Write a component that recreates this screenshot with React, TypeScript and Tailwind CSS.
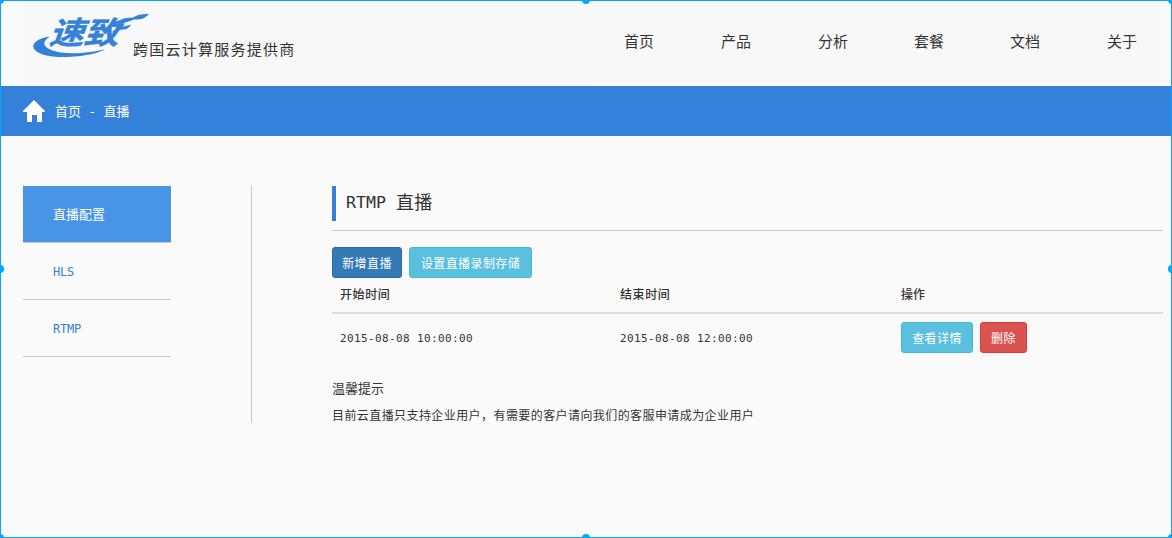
const sans = "font-['Noto_Sans_CJK_SC',sans-serif]";
const mono = "font-['DejaVu_Sans_Mono','Liberation_Mono',monospace]";

const NAV = [
  { label: "首页", width: "w-[97px]" },
  { label: "产品", width: "w-[97px]" },
  { label: "分析", width: "w-[96px]" },
  { label: "套餐", width: "w-[96px]" },
  { label: "文档", width: "w-[97px]" },
  { label: "关于", width: "w-[55px]" },
];

function Logo() {
  return (
    <svg width="118" height="60" viewBox="32 4 118 60" className="shrink-0 overflow-visible" fill="#3481da">
      <text
        x="0"
        y="0"
        transform="translate(48.5 43.6) skewX(-20) scale(1.12 1)"
        fontFamily="'Noto Sans CJK SC', sans-serif"
        fontWeight="700"
        fontSize="31"
        stroke="#3481da"
        strokeWidth="0.4"
      >
        速致
      </text>
      <path d="M50 36.5 C38 38 32 43 33.5 48 C36 54 49 57.5 68 57 C86 56 100 53 105 49 C93 52.5 75 54.5 61 52.5 C45 50 39 43 50 36.5Z" />
      <path d="M112 23 L124 18.5 C128 17.5 130 18 133 17.5 C137 15 141 14 149 14 C144 19 140 20 134 19.5 C130 21 125 23 119 23.5Z" />
      <path d="M112 32 C117 27.5 121 27 124 26.5 C127 26 129 25 131 24.5 C129 28.5 126 30 122 29.5 C119 30 116 31.5 114 33Z" />
    </svg>
  );
}

function Header() {
  return (
    <header className="flex h-[85px] pl-[22px]">
      <div className="flex h-full w-[567px] items-start bg-[#f8f8f8] pl-[9px] pt-[3px]">
        <Logo />
        <span className="-ml-[17px] mt-[33px] whitespace-nowrap text-[15px] leading-6 tracking-[1.25px]">跨国云计算服务提供商</span>
      </div>
      <div className="grow border-b-[3px] border-white pr-[9px]">
        <nav className="flex h-full bg-[#f8f8f8] pl-[34px] pt-[28px]">
          {NAV.map((n) => (
            <a key={n.label} className={`${n.width} shrink-0 whitespace-nowrap text-[15px] leading-6`}>{n.label}</a>
          ))}
        </nav>
      </div>
    </header>
  );
}

function Button({ label, look }: { label: string; look: string }) {
  return (
    <button className={`${look} h-[31px] whitespace-nowrap rounded-[3px] border text-center text-[12px] leading-[29px] tracking-[0.4px] text-white`}>
      {label}
    </button>
  );
}

const HANDLES = [
  "-left-[5px] -top-[5px]",
  "left-[581px] -top-[5px]",
  "-right-[5px] -top-[5px]",
  "-left-[5px] top-[264px]",
  "-right-[5px] top-[264px]",
  "-left-[5px] -bottom-[5px]",
  "left-[581px] -bottom-[5px]",
  "-right-[5px] -bottom-[5px]",
];

export default function App() {
  return (
    <div className={`${sans} relative h-[538px] w-[1172px] overflow-hidden border border-[#00a8ff] bg-[#fafafa] text-[#333]`}>
      <Header />
      <div className="flex h-[50px] items-center bg-[#3481da] pl-[22px] text-[13px] text-white">
        <svg width="22" height="22" viewBox="0 0 22 22" fill="white">
          <path d="M11 0 22 11v1h-3v10h-5v-7H9v7H4V12H0v-1Z" />
        </svg>
        <span className="ml-[10px]">首页</span>
        <span className="ml-[9px] mr-[9px]">-</span>
        <span>直播</span>
      </div>

      <div className="flex pl-[22px] pt-[50px]">
        <aside className="w-[148px] shrink-0 text-[#3481da]">
          <div className="h-[57px] border-b border-[#c8c8c8] bg-[#4895e8] pl-[30px] text-[13px] leading-[56px] text-white">直播配置</div>
          <div className={`${mono} h-[57px] border-b border-[#c8c8c8] pl-[30px] text-[12px] leading-[59px] tracking-[-0.2px]`}>HLS</div>
          <div className={`${mono} h-[57px] border-b border-[#c8c8c8] pl-[30px] text-[12px] leading-[59px] tracking-[-0.2px]`}>RTMP</div>
        </aside>
        <div className="ml-[80px] h-[237px] w-px shrink-0 bg-[#c8c8c8]" />
        <main className="ml-[80px] w-[831px] shrink-0">
          <div className="h-[45px] border-b border-[#c8c8c8]">
            <h1 className="flex h-[35px] items-center border-l-4 border-[#3481da] pb-[6px] pl-[10px]">
              <span className={`${mono} pt-[5px] text-[16.6px] leading-none`}>RTMP</span>
              <span className="ml-[10px] text-[18px] leading-none tracking-[0.4px]">直播</span>
            </h1>
          </div>
          <div className="mt-4 flex gap-[7px]">
            <Button label="新增直播" look="w-[70px] bg-[#337ab7] border-[#2e6da4]" />
            <Button label="设置直播录制存储" look="w-[123px] bg-[#5bc0de] border-[#46b8da]" />
          </div>
          <table className="w-full table-fixed text-left text-[12px]">
            <thead>
              <tr className="h-[35px] border-b-2 border-[#ddd]">
                <th className="w-[280px] px-2 pb-[3px] font-medium tracking-[0.6px]">开始时间</th>
                <th className="w-[281px] px-2 pb-[3px] font-medium tracking-[0.6px]">结束时间</th>
                <th className="px-2 pb-[3px] font-medium">操作</th>
              </tr>
            </thead>
            <tbody>
              <tr className="h-[48px] font-['DejaVu_Sans_Mono','Noto_Sans_CJK_SC',monospace] text-[11px] tracking-[0.378px]">
                <td className="px-2 pt-[4px]">2015-08-08 10:00:00</td>
                <td className="px-2 pt-[4px]">2015-08-08 12:00:00</td>
                <td className={`${sans} px-2`}>
                  <div className="flex gap-[7px]">
                    <Button label="查看详情" look="w-[72px] bg-[#5bc0de] border-[#46b8da]" />
                    <Button label="删除" look="w-[47px] bg-[#d9534f] border-[#d43f3a]" />
                  </div>
                </td>
              </tr>
            </tbody>
          </table>
          <h2 className="mt-[17px] text-[13px] leading-5">温馨提示</h2>
          <p className="mt-[7px] whitespace-nowrap text-[12px] leading-5 tracking-[0.42px]">目前云直播只支持企业用户，有需要的客户请向我们的客服申请成为企业用户</p>
        </main>
      </div>
      {HANDLES.map((h) => (
        <i key={h} className={`${h} absolute size-2 rounded-full bg-[#00a8ff]`} />
      ))}
    </div>
  );
}
